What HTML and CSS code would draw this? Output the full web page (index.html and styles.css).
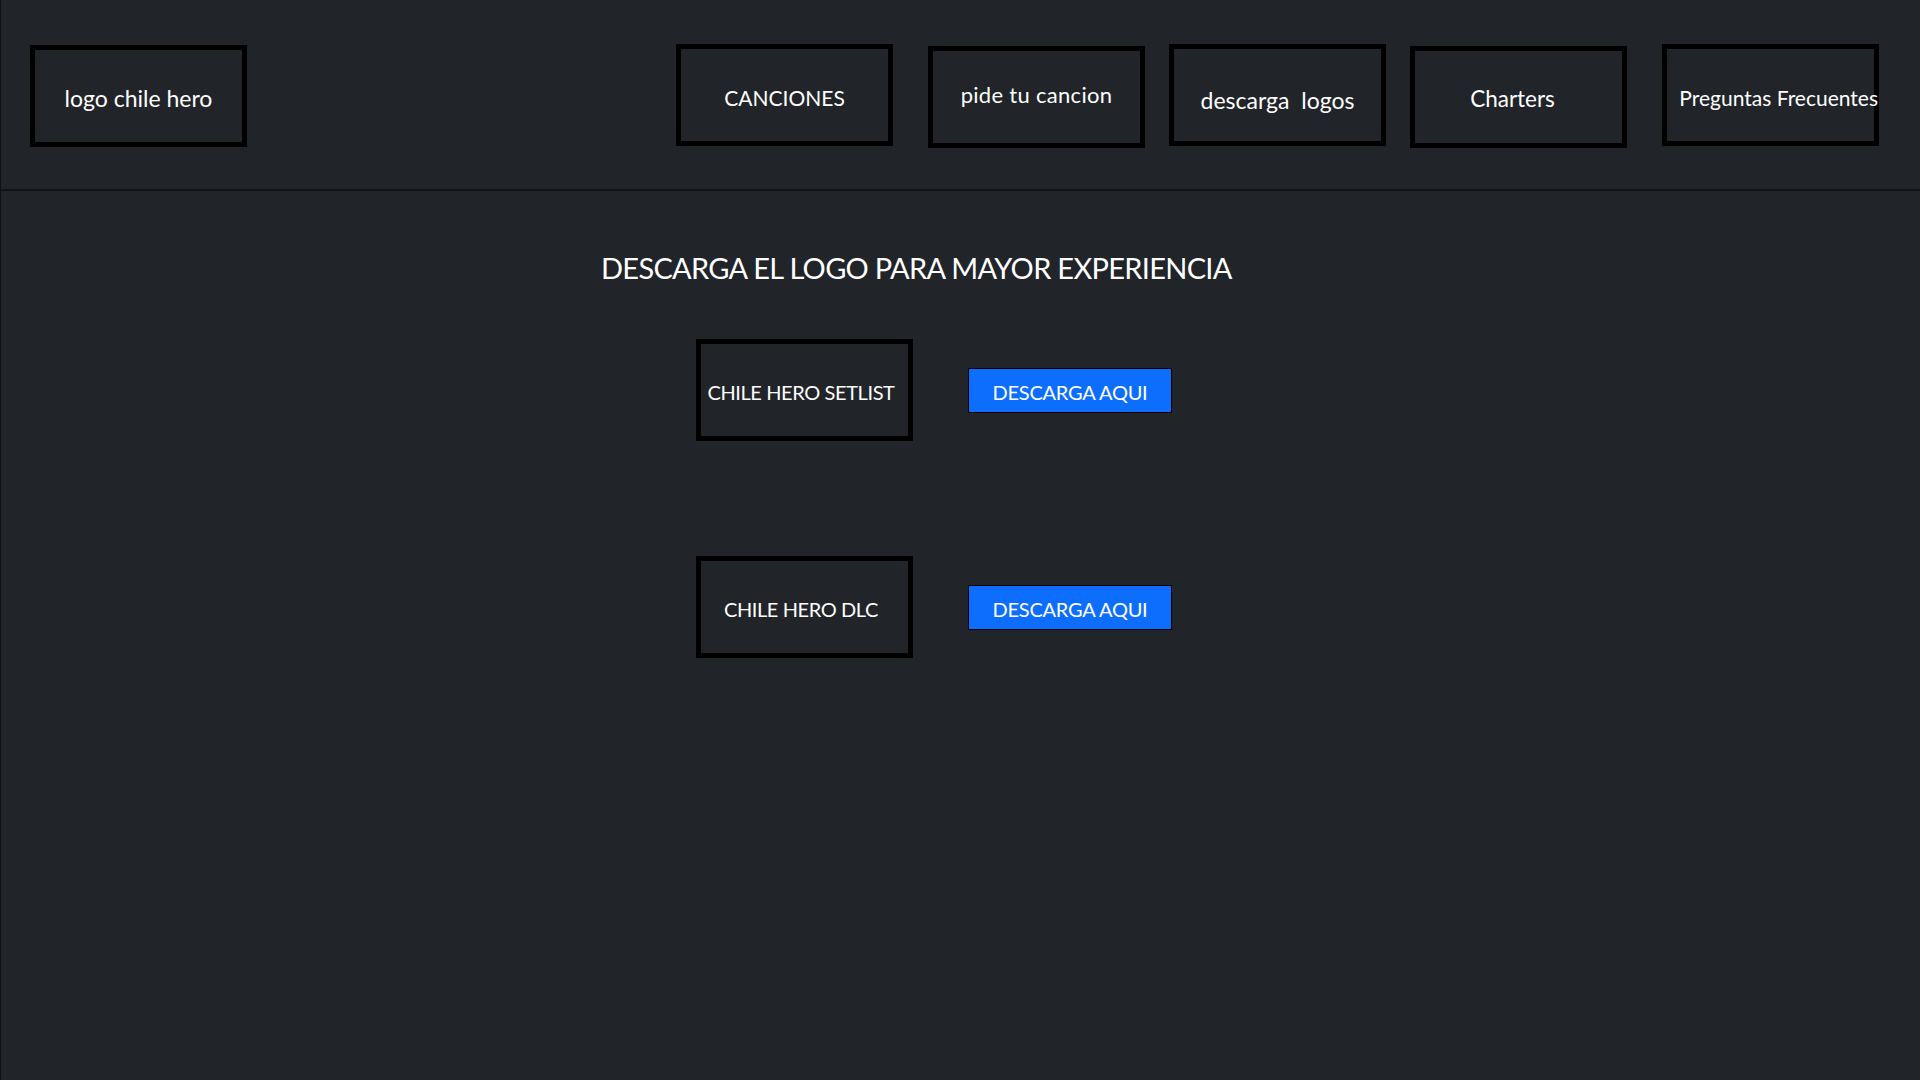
FILE: index.html
```html
<!DOCTYPE html>
<html lang="es">
<head>
<meta charset="utf-8">
<title>Chile Hero - Descarga logos</title>
<link rel="stylesheet" href="styles.css">
</head>
<body>
<div class="page">
  <header class="header">
    <div class="box logo">logo chile hero</div>
    <nav class="nav">
      <a class="box nav-item canciones" href="#">CANCIONES</a>
      <a class="box nav-item low wide-gap pide" href="#">pide tu cancion</a>
      <a class="box nav-item descarga" href="#">descarga&nbsp; logos</a>
      <a class="box nav-item low charters" href="#">Charters</a>
      <a class="box nav-item wide-gap preguntas" href="#"><span class="overflow">Preguntas Frecuentes</span></a>
    </nav>
  </header>
  <main class="content">
    <h1 class="title">DESCARGA EL LOGO PARA MAYOR EXPERIENCIA</h1>
    <div class="rows">
      <div class="row">
        <div class="box item">CHILE HERO SETLIST</div>
        <a class="btn" href="#">DESCARGA AQUI</a>
      </div>
      <div class="row">
        <div class="box item">CHILE HERO DLC</div>
        <a class="btn" href="#">DESCARGA AQUI</a>
      </div>
    </div>
  </main>
</div>
</body>
</html>
```
FILE: styles.css
```css
* { box-sizing: border-box; }

html, body {
  margin: 0;
  padding: 0;
  background: #212429;
}

body {
  font-family: Lato, "Liberation Sans", sans-serif;
  color: #ffffff;
}

.page {
  min-height: 1080px;
  border-left: 1px solid #0e1013;
}

.header {
  display: flex;
  justify-content: space-between;
  align-items: flex-start;
  height: 191px;
  padding: 44px 41px 0 29px;
  border-bottom: 2px solid #111316;
}

.box {
  display: flex;
  align-items: center;
  justify-content: center;
  border: 5px solid #000;
  color: #fff;
  text-decoration: none;
  white-space: nowrap;
}

.logo {
  width: 217px;
  height: 102px;
  margin-top: 1px;
  font-size: 23px;
  padding-top: 4px;
}

.nav {
  display: flex;
  gap: 24px;
}

.nav-item {
  width: 217px;
  height: 102px;
  font-size: 22px;
  padding-top: 2px;
}

.nav-item.low { margin-top: 2px; }
.nav-item.wide-gap { margin-left: 11px; }

.canciones {
  font-size: 21px;
  padding-top: 4px;
}

.pide {
  letter-spacing: 0.3px;
  padding-top: 0;
  padding-bottom: 6px;
}

.descarga {
  font-size: 23px;
  padding-top: 9px;
}

.charters {
  font-size: 22.5px;
  padding-top: 2px;
  padding-right: 12px;
}

.preguntas {
  font-size: 21px;
  justify-content: flex-end;
  padding-top: 4px;
}

.overflow {
  margin-right: -4px;
}

.content {
  padding-left: 600px;
}

.title {
  margin: 0;
  padding-top: 57px;
  font-size: 29px;
  font-weight: 400;
  letter-spacing: -0.7px;
  line-height: 40px;
  white-space: nowrap;
}

.rows {
  display: flex;
  flex-direction: column;
  gap: 115px;
  padding-top: 51px;
  padding-left: 95px;
}

.row {
  display: flex;
  align-items: center;
  gap: 55px;
}

.item {
  width: 217px;
  height: 102px;
  font-size: 20px;
  letter-spacing: -0.4px;
  padding-top: 3px;
  padding-right: 7px;
}

.btn {
  display: flex;
  align-items: center;
  justify-content: center;
  width: 204px;
  height: 45px;
  background: #0d6efd;
  border: 1px solid #000;
  color: #fff;
  text-decoration: none;
  font-size: 20px;
  letter-spacing: -0.25px;
  padding-top: 3px;
}
```
